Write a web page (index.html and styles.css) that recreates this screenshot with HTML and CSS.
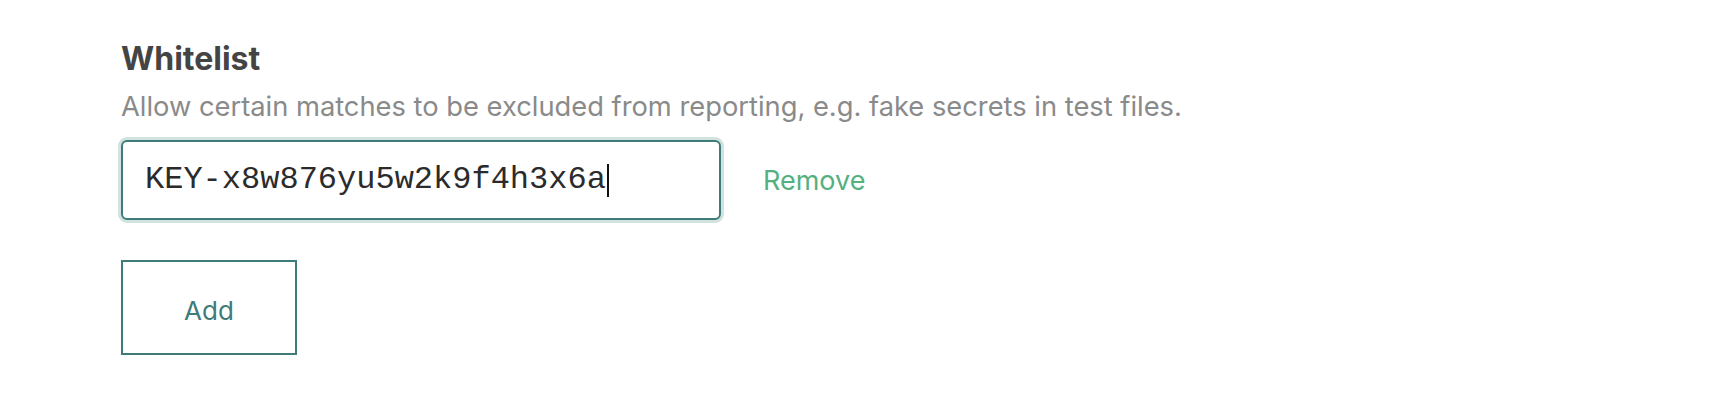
FILE: index.html
```html
<!DOCTYPE html>
<html lang="en">
<head>
<meta charset="utf-8">
<title>Whitelist</title>
<link rel="stylesheet" href="styles.css">
</head>
<body>
<section class="section">
  <h2 class="title">Whitelist</h2>
  <p class="desc">Allow certain matches to be excluded from reporting, e.g. fake secrets in test files.</p>
  <div class="row">
    <div class="field"><span class="value">KEY-x8w876yu5w2k9f4h3x6a</span><span class="caret"></span></div>
    <a class="remove" href="#">Remove</a>
  </div>
  <button class="add" type="button">Add</button>
</section>
</body>
</html>
```

FILE: styles.css
```css
html, body {
  margin: 0;
  padding: 0;
  background: #ffffff;
}

body {
  font-family: "Inter", "Roboto", "Liberation Sans", sans-serif;
  width: 1720px;
  height: 414px;
  overflow: hidden;
}

.section {
  display: flex;
  flex-direction: column;
  align-items: flex-start;
  padding: 40px 0 0 121px;
}

.title {
  margin: 0;
  font-size: 32px;
  line-height: 38px;
  font-weight: 700;
  color: #444444;
}

.desc {
  margin: 12px 0 0 0;
  font-size: 27.3px;
  line-height: 34px;
  color: #8a8a8a;
}

.row {
  display: flex;
  align-items: center;
  margin-top: 16px;
}

.field {
  box-sizing: border-box;
  width: 600px;
  height: 80px;
  display: flex;
  align-items: center;
  padding: 0 0 0 22px;
  border: 2px solid #3f7b78;
  border-radius: 6px;
  box-shadow: 0 0 0 3px #d2e2e1;
  background: #ffffff;
}

.value {
  font-family: "Liberation Mono", "Courier New", monospace;
  font-size: 32px;
  color: #2b2b2b;
  line-height: 40px;
}

.caret {
  display: inline-block;
  width: 2px;
  height: 33px;
  margin-left: 1px;
  background: #111111;
}

.remove {
  margin-left: 42px;
  font-size: 27px;
  color: #55b07f;
  text-decoration: none;
}

.add {
  box-sizing: border-box;
  margin-top: 40px;
  width: 176px;
  height: 95px;
  border: 2px solid #3f7b78;
  border-radius: 0;
  background: #ffffff;
  color: #3f7b78;
  font-family: inherit;
  font-size: 26px;
  padding: 6px 0 0 0;
}
```
